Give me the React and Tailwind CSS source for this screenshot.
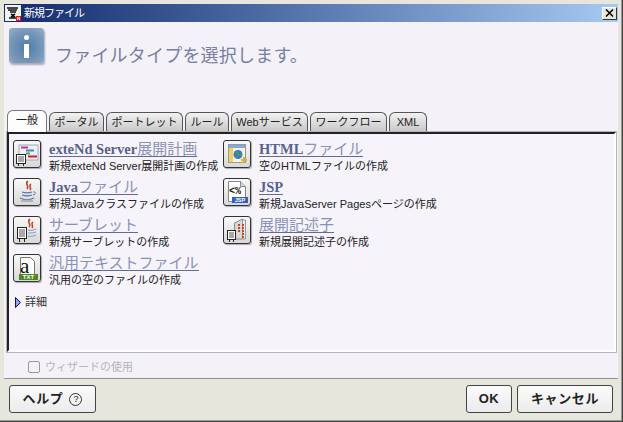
import React from "react";

const SANS = "font-['Liberation_Sans','Noto_Sans_CJK_JP',sans-serif]";
const SERIF = "font-['Liberation_Serif','Noto_Sans_CJK_JP',serif]";

function IconBox({ children }) {
  return (
    <div className="h-[28px] w-[28px] shrink-0 rounded-[3px] border border-[#333] bg-gradient-to-b from-[#f8f8f8] to-[#d8d8d8] shadow-[1px_1px_1px_#aaa]">
      <svg viewBox="0 0 26 26" width="26" height="26">{children}</svg>
    </div>
  );
}

const PlanIcon = () => (
  <IconBox>
    <rect x="5" y="4" width="19" height="15" fill="#eef0f6" stroke="#a4a8bc" />
    <path d="M7 6.5h7" stroke="#d0309a" strokeWidth="2" />
    <path d="M12 9.5h8" stroke="#2f8fd0" strokeWidth="2" />
    <path d="M12 12.5h4" stroke="#4fa53a" strokeWidth="2" />
    <path d="M14 15.5h9" stroke="#d02020" strokeWidth="2" />
    <rect x="2.5" y="13.5" width="9" height="9" fill="#fff" stroke="#222" />
    <path d="M4 16h6M4 18h6M4 20h6" stroke="#555" />
    <path d="M4.5 23v2M9.5 23v2" stroke="#222" />
  </IconBox>
);

const Steam = () => (
  <path d="M14 2c-4 3 2 5-1 8M17 5c-3 2 1 3-1 6" fill="none" stroke="#c8452a" strokeWidth="1.6" />
);

const JavaIcon = () => (
  <IconBox>
    <Steam />
    <path d="M8 13c3 1 7 1 10 0M8 16c3 1 7 1 10 0M6 19c4 2 10 2 14 0" fill="none" stroke="#5a76a8" strokeWidth="1.2" />
    <path d="M19 13c3-1 3 3 0 3" fill="none" stroke="#5a76a8" />
    <path d="M7 22h12" stroke="#888" />
  </IconBox>
);

const ServletIcon = () => (
  <IconBox>
    <g transform="translate(2 0)"><Steam /></g>
    <path d="M14 13c3 1 6 0 8-1M14 16c3 0 6 0 8-1M14 19c3 1 6 0 8-1" fill="none" stroke="#7c98c8" />
    <rect x="3.5" y="10.5" width="9" height="11" fill="#fff" stroke="#222" />
    <path d="M5 13h6M5 15h6M5 17h6M5 19h6" stroke="#555" />
    <path d="M5.5 22v3M10.5 22v3" stroke="#222" />
  </IconBox>
);

const TextIcon = () => (
  <IconBox>
    <path d="M6.5 2.5h10l4 4v13h-14z" fill="#fff" stroke="#777" />
    <text x="6" y="18" fontSize="21" fontFamily="'Liberation Serif',serif" fill="#111">a</text>
    <rect x="5" y="19" width="19" height="6" fill="#4c8a1c" />
    <text x="14.5" y="24.3" textAnchor="middle" fontSize="6" fontWeight="700" fontFamily="'Liberation Sans',sans-serif" fill="#fff">TXT</text>
  </IconBox>
);

const HtmlIcon = () => (
  <IconBox>
    <rect x="4.5" y="3.5" width="17" height="18" fill="#f8f4dc" stroke="#999" />
    <rect x="5" y="4" width="16" height="3" fill="#88a8dc" />
    <rect x="5" y="7" width="4" height="14" fill="#f0d060" />
    <circle cx="14" cy="13.5" r="4.5" fill="#3a78c8" />
    <path d="M11.5 11.5c2-1 3.5 0 3.5 1.5s-2.5 1.5-2.5 3M16 15l1.5-1.500" stroke="#4ca04c" strokeWidth="1.4" fill="none" />
    <path d="M20 16v6M17 19h6" stroke="#d8b040" strokeWidth="2.2" />
  </IconBox>
);

const JspIcon = () => (
  <IconBox>
    <path d="M4.5 2.5h12l5 5v15h-17z" fill="#fff" stroke="#888" />
    <path d="M16.5 2.5v5h5" fill="#ddd" stroke="#888" />
    <text x="5" y="15" fontSize="10" fontWeight="700" fontFamily="'Liberation Mono',monospace" fill="#111">&lt;%</text>
    <rect x="8" y="18" width="16" height="6" fill="#2f62b8" />
    <text x="16" y="23.2" textAnchor="middle" fontSize="5.5" fontWeight="700" fontFamily="'Liberation Sans',sans-serif" fill="#fff">JSP</text>
  </IconBox>
);

const DescriptorIcon = () => (
  <IconBox>
    <path d="M10.5 6l8-4v20h-8z" fill="#d8d8d8" stroke="#888" />
    <path d="M18.5 3h3v19h-3z" fill="#efefef" stroke="#999" />
    <path d="M14 8h2M18 8h2M14 11h2M18 11h2M14 14h2M18 14h2M18 17h2M18 20h2" stroke="#c24a20" strokeWidth="2" />
    <rect x="3.5" y="13.5" width="8" height="9" fill="#fff" stroke="#222" />
    <path d="M5 16h5M5 18h5M5 20h5" stroke="#555" />
    <path d="M5.5 23v2M9.5 23v2" stroke="#222" />
  </IconBox>
);

function FileRow({ icon, latin, cjk, desc }) {
  return (
    <div className="flex h-[38px] gap-[8px]">
      {icon}
      <div className="flex min-w-0 flex-col items-start">
        <div className={`${SERIF} flex h-[17px] items-end border-b border-[#5f6d96] leading-[14px] whitespace-nowrap`}>
          {latin && <span className="text-[14.5px] font-bold text-[#56628e]">{latin}</span>}
          {cjk && <span className="text-[15px] text-[#8a92b6]">{cjk}</span>}
        </div>
        <div className={`${SANS} mt-[2px] text-[11px] leading-[14px] whitespace-nowrap text-[#222]`}>{desc}</div>
      </div>
    </div>
  );
}

function Tab({ label, active, w }) {
  return (
    <div
      className={`${SANS} relative flex items-center justify-center rounded-t-[6px] border border-b-0 text-[11px] whitespace-nowrap text-[#222] ${w} ${
        active
          ? "-mb-[1px] h-[22px] border-[#777] bg-[#fdfdfd] pb-[3px]"
          : "h-[19px] border-[#555] bg-gradient-to-b from-[#f2f2f2] to-[#c9c9c9]"
      }`}
    >
      {label}
    </div>
  );
}

function FooterButton({ children, w }) {
  return (
    <button className={`${SANS} flex h-[28px] items-center justify-center gap-[6px] rounded-[3px] border border-[#444] bg-gradient-to-b from-[#fbfbfb] to-[#ebebeb] text-[13px] font-bold tracking-[0.6px] text-[#222] ${w}`}>
      {children}
    </button>
  );
}

export default function App() {
  return (
    <div className="h-[422px] w-[623px] overflow-hidden bg-[#e6e6dc] pt-[4px] pr-[5px] pb-[3px] pl-[4px] shadow-[inset_-1px_-1px_0_#444,inset_-2px_-2px_0_#999]">
      <div className="flex h-[18px] items-center justify-between bg-gradient-to-r from-[#132a6c] via-[#5878b0] to-[#a6caf0] pr-[1px] pl-[1px]">
        <div className="flex items-center gap-[3px]">
          <svg width="16" height="16" viewBox="0 0 16 16">
            <rect width="16" height="16" fill="#f2f2f2" />
            <path d="M2 3h11M3 5h9M5 7l6 0M6 9l4 3M10 9l-4 3M4 13h8" stroke="#111" strokeWidth="1.6" />
            <rect x="11" y="11" width="5" height="5" fill="#d81818" />
            <path d="M12.5 15v-3l2 3v-3" stroke="#fff" strokeWidth="0.7" fill="none" />
          </svg>
          <span className={`${SANS} text-[11px] leading-none tracking-[-1px] text-white`}>新規ファイル</span>
        </div>
        <div className="flex h-[13px] w-[15px] items-center justify-center border border-t-[#fff] border-r-[#333] border-b-[#333] border-l-[#fff] bg-[#e6e6dc]">
          <svg width="9" height="8" viewBox="0 0 9 8">
            <path d="M1 0.5l7 7M8 0.5l-7 7" stroke="#000" strokeWidth="1.5" />
          </svg>
        </div>
      </div>

      <div className="flex h-[357px] flex-col border-b border-[#8f8f8f] bg-[#f4f2f8] pr-[1px] pl-[2px]">
        <div className="flex h-[88px] items-start gap-[11px] pt-[6px] pl-[3px]">
          <div className="relative flex h-[35px] w-[35px] justify-center rounded-[3px] bg-[radial-gradient(circle_at_50%_55%,_#4f7ba8,_#7e9cbc_70%,_#9cb4cc)] shadow-[1px_2px_2px_#a9a9b5]">
            <span className="mt-[7px] h-[5px] w-[5px] rounded-full bg-white" />
            <span className="absolute top-[16px] h-[14px] w-[5px] bg-white" />
          </div>
          <div className={`${SANS} mt-[18px] text-[18px] leading-[20px] tracking-[0.2px] text-[#767fa4]`}>
            ファイルタイプを選択します。
          </div>
        </div>

        <div className="relative z-10 flex h-[21px] items-end gap-[2px] pl-[1px]">
          <Tab label="一般" active w="w-[40px]" />
          <Tab label="ポータル" w="w-[55px]" />
          <Tab label="ポートレット" w="w-[77px]" />
          <Tab label="ルール" w="w-[44px]" />
          <Tab label="Webサービス" w="w-[77px]" />
          <Tab label="ワークフロー" w="w-[77px]" />
          <Tab label="XML" w="w-[38px]" />
        </div>

        <div className="h-[222px] border border-[#b4b4b4]">
          <div className="h-full border-t-[2px] border-r-[2px] border-b-[2px] border-l-[2px] border-t-[#222] border-r-[#fff] border-b-[#fff] border-l-[#222] bg-[#f6f4fa] pt-[6px] pl-[4px]">
            <div className="flex">
              <div className="w-[210px]">
                <FileRow icon={<PlanIcon />} latin="exteNd Server" cjk="展開計画" desc="新規exteNd Server展開計画の作成" />
                <FileRow icon={<JavaIcon />} latin="Java" cjk="ファイル" desc="新規Javaクラスファイルの作成" />
                <FileRow icon={<ServletIcon />} cjk="サーブレット" desc="新規サーブレットの作成" />
                <FileRow icon={<TextIcon />} cjk="汎用テキストファイル" desc="汎用の空のファイルの作成" />
              </div>
              <div>
                <FileRow icon={<HtmlIcon />} latin="HTML" cjk="ファイル" desc="空のHTMLファイルの作成" />
                <FileRow icon={<JspIcon />} latin="JSP" desc="新規JavaServer Pagesページの作成" />
                <FileRow icon={<DescriptorIcon />} cjk="展開記述子" desc="新規展開記述子の作成" />
              </div>
            </div>
            <div className="mt-[3px] flex items-center gap-[4px] pl-[2px]">
              <svg width="6" height="11" viewBox="0 0 6 11">
                <path d="M0.5 0.5L5.5 5.5L0.5 10.5Z" fill="#8fa0e8" stroke="#10106a" />
              </svg>
              <span className={`${SANS} text-[11px] leading-[14px] text-[#333]`}>詳細</span>
            </div>
          </div>
        </div>

        <div className="flex items-center gap-[5px] pt-[8px] pl-[22px]">
          <span className="h-[12px] w-[12px] rounded-[2px] border border-[#999] bg-[#f4f2f8]" />
          <span className={`${SANS} text-[11px] leading-[12px] text-[#b5b5b8]`}>ウィザードの使用</span>
        </div>
      </div>

      <div className="flex items-start justify-between pt-[6px] pr-[5px] pl-[5px]">
        <FooterButton w="w-[87px]">
          ヘルプ
          <span className="flex h-[13px] w-[13px] items-center justify-center rounded-full border border-[#333] text-[9px] leading-none font-normal tracking-normal">?</span>
        </FooterButton>
        <div className="flex gap-[5px]">
          <FooterButton w="w-[46px]">OK</FooterButton>
          <FooterButton w="w-[96px]">キャンセル</FooterButton>
        </div>
      </div>
    </div>
  );
}
